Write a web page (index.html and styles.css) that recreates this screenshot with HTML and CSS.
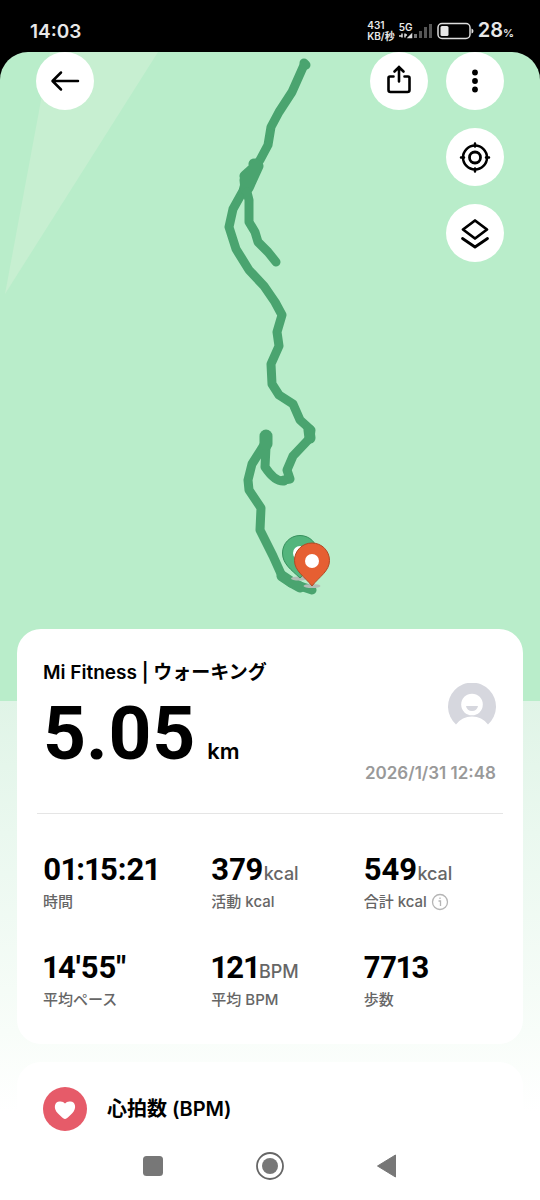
FILE: index.html
```html
<!DOCTYPE html>
<html lang="ja">
<head>
<meta charset="utf-8">
<meta name="viewport" content="width=device-width, initial-scale=1">
<title>Mi Fitness | ウォーキング</title>
<link rel="stylesheet" href="styles.css">
</head>
<body>
<header class="status">
  <time class="clock">14:03</time>
  <div class="indicators">
    <div class="speed"><span>431</span><span>KB/秒</span></div>
    <div class="signal">
      <span class="network">5G</span>
      <svg width="34" height="17" viewBox="0 0 34 17" aria-hidden="true">
        <path d="M0 13h3M3 10.500v4M6 14.500V10.500M6 12h2M9.500 14.500l3-3v3z" fill="none" stroke="#ddd" stroke-width="1.500"/>
        <path d="M15 11h3v4h-3z" fill="#777"/>
        <path d="M20 8h3v7h-3zM25 4h3v11h-3zM30 1h3v14h-3z" fill="#555"/>
      </svg>
    </div>
    <svg class="battery" width="37" height="18" viewBox="0 0 37 18" aria-hidden="true">
      <rect x="1" y="1.500" width="32" height="15" rx="4" fill="none" stroke="#ddd" stroke-width="1.500"/>
      <rect x="3.500" y="4" width="8" height="10" rx="1.500" fill="#e8e8e8"/>
      <path d="M34.500 6.500q2 .5 2 2.500t-2 2.500z" fill="#ddd"/>
    </svg>
    <div class="charge">28<small>%</small></div>
  </div>
</header>

<main class="screen">
  <section class="map" aria-label="ルート">
    <svg class="route" viewBox="0 52 540 649" preserveAspectRatio="xMidYMin slice" aria-hidden="true">
      <path d="M50 52H158L5 294z" fill="#c7efd1"/>
      <g fill="none" stroke="#4aa46f" stroke-linejoin="round" stroke-linecap="round">
        <path d="M304 63L306 65" stroke-width="9"/>
        <path d="M304 65L292 92 279 112 271 127 268 145 260 160 252 170 246 180 243 191 233 209 229 227 236 249 249 270 264 286 275 302 282 315 277 332 279 346 271 364 272 384 279 395 293 404 300 420 311 430 310 438 293 456 287 470 290 479 284 480" stroke-width="9"/>
        <path d="M284 481Q275 482 265 467L266 447M266 437L264 445 252 464 248 480 249 490 261 508 260 530 273 556 282 576 291 583 312 590" stroke-width="9"/>
        <path d="M266 436V444" stroke-width="13"/>
        <path d="M309 430L310 438M282 576L291 582 300 587" stroke-width="11"/>
        <path d="M254 164L258 166 248 188 245 176 255 167M245 180L246 190" stroke-width="11"/>
        <path d="M247 192L249 200 249 222 255 232 258 242 268 252 276 262" stroke-width="9"/>
      </g>
      <ellipse cx="299" cy="578.500" rx="8" ry="2" fill="#b2bdb5"/>
      <path d="M300 535.500c-10 0-17.500 8-17.500 17.500 0 11 9 17 17.500 25 8.500-8 17.500-14 17.500-25 0-9.500-7.500-17.500-17.500-17.500z" fill="#53b57c" stroke="#36905c"/>
      <circle cx="300" cy="553" r="7" fill="#fff"/>
      <ellipse cx="312" cy="586" rx="8.500" ry="2" fill="#b2bdb5"/>
      <path d="M312 543c-10 0-17.500 8-17.500 17.500 0 10.500 10 16 17.500 25.500 7.500-9.500 17.500-15 17.500-25.500 0-9.500-7.500-17.500-17.500-17.500z" fill="#e65f32" stroke="#b14a25"/>
      <circle cx="312" cy="561" r="7" fill="#fff"/>
    </svg>
    <div class="toolbar">
      <button class="round" aria-label="戻る">
        <svg width="36" height="36" viewBox="0 0 36 36"><path d="M31 18H6M14 9.500L5.500 18L14 26.500" fill="none" stroke="#000" stroke-width="2.500" stroke-linecap="round" stroke-linejoin="round"/></svg>
      </button>
      <div class="tools">
        <button class="round" aria-label="共有">
          <svg width="36" height="36" viewBox="0 0 36 36"><path d="M12.500 13.500H9q-1.500 0-1.500 1.500V27q0 2 2 2h17q2 0 2-2V15q0-1.500-1.500-1.500H23.500M18 18.500V5M13.500 8.500L18 4L22.500 8.500" fill="none" stroke="#000" stroke-width="2.600" stroke-linecap="round"/></svg>
        </button>
        <div class="stack">
          <button class="round" aria-label="メニュー">
            <svg width="36" height="36" viewBox="0 0 36 36"><circle cx="18" cy="9.500" r="2.900"/><circle cx="18" cy="18" r="2.900"/><circle cx="18" cy="26.500" r="2.900"/></svg>
          </button>
          <button class="round" aria-label="現在地">
            <svg width="36" height="36" viewBox="0 0 36 36"><g fill="none" stroke="#000" stroke-width="2.500" stroke-linecap="round"><circle cx="18" cy="18.500" r="12"/><circle cx="18" cy="18.500" r="5.500" stroke-width="2.800"/><path d="M18 4.500v3M18 29.500v3M4 18.500h3M29 18.500h3"/></g></svg>
          </button>
          <button class="round" aria-label="レイヤー">
            <svg width="36" height="36" viewBox="0 0 36 36"><path d="M18 5.500L30 14.500L18 23.500L6 14.500zM5.500 23.500L18 32L30.500 23.500" fill="none" stroke="#000" stroke-width="2.800" stroke-linecap="round" stroke-linejoin="round"/></svg>
          </button>
        </div>
      </div>
    </div>
  </section>

  <div class="content">
    <section class="card">
      <div class="summary">
        <div class="workout">
          <h1 class="title">Mi Fitness | ウォーキング</h1>
          <p class="distance">5.05<span class="unit">km</span></p>
        </div>
        <div class="owner">
          <svg width="48" height="48" viewBox="0 0 48 48" aria-hidden="true">
            <path d="M8 41.500A24 24 0 1 1 40 41.500Q34 33.500 24 33.500T8 41.500z" fill="#d6d7de"/>
            <circle cx="24" cy="21.500" r="10.800" fill="#fff"/>
            <path d="M18 23h12q-1 5-6 5T18 23z" fill="#d6d7de"/>
          </svg>
          <time class="date">2026/1/31 12:48</time>
        </div>
      </div>
      <dl class="stats">
        <div class="stat"><dt>時間</dt><dd>01:15:21</dd></div>
        <div class="stat"><dt>活動 kcal</dt><dd>379<span>kcal</span></dd></div>
        <div class="stat"><dt>合計 kcal
          <svg class="info" width="18" height="18" viewBox="0 0 18 18" aria-hidden="true"><g fill="none" stroke="#b5b5b5" stroke-width="1.300"><circle cx="9" cy="9" r="7.500"/><path d="M7.500 8H9.500V13M9 4.500V6"/></g></svg>
        </dt><dd>549<span>kcal</span></dd></div>
        <div class="stat"><dt>平均ペース</dt><dd>14'55"</dd></div>
        <div class="stat"><dt>平均 BPM</dt><dd>121<span>BPM</span></dd></div>
        <div class="stat"><dt>歩数</dt><dd>7713</dd></div>
      </dl>
    </section>
    <section class="card heart">
      <svg width="44" height="44" viewBox="0 0 44 44" aria-hidden="true">
        <circle cx="22" cy="22" r="22" fill="#e65b69"/>
        <path d="M22 32Q20.500 32 15 26.500C9.500 21 12 14.500 16.500 14.500Q20 14 22 16.500Q24 14 27.500 14.500C32 14.500 34.500 21 29 26.500Q23.500 32 22 32z" fill="#fff"/>
      </svg>
      <h2 class="metric">心拍数 (BPM)</h2>
    </section>
  </div>

  <nav class="navbar" aria-label="システム">
    <button aria-label="最近のアプリ"><svg width="28" height="28" viewBox="0 0 28 28"><rect x="4" y="4" width="20" height="20" rx="3.500" fill="#777"/></svg></button>
    <button aria-label="ホーム"><svg width="28" height="28" viewBox="0 0 28 28"><circle cx="14" cy="14" r="13" fill="none" stroke="#666" stroke-width="1.800"/><circle cx="14" cy="14" r="8" fill="#777"/></svg></button>
    <button aria-label="戻る"><svg width="28" height="28" viewBox="0 0 28 28"><path d="M4.500 14L22.500 3V25z" fill="#777" stroke="#777" stroke-linejoin="round"/></svg></button>
  </nav>
</main>
</body>
</html>
```
FILE: styles.css
```css
* { box-sizing: border-box; margin: 0; }

body {
  min-height: 100vh;
  display: flex;
  flex-direction: column;
  background: #000;
  font-family: Inter, "Noto Sans CJK JP", sans-serif;
}

button {
  display: grid;
  place-items: center;
  padding: 0;
  border: 0;
  background: none;
}

svg { display: block; flex: none; }

.status {
  display: flex;
  align-items: center;
  justify-content: space-between;
  height: 52px;
  padding: 10px 26px 0 30px;
  color: #e8e8e8;
}

.clock { font-size: 19px; font-weight: 600; }

.indicators { display: flex; align-items: center; gap: 4px; }

.speed {
  display: flex;
  flex-direction: column;
  font-size: 10px;
  line-height: 11px;
  font-weight: 600;
}

.signal { display: grid; }
.signal > * { grid-area: 1 / 1; }
.network { font-size: 10px; line-height: 8px; font-weight: 600; }

.charge { font-size: 20px; line-height: 24px; font-weight: 600; }
.charge small { font-size: 11px; }

.screen {
  flex: 1;
  display: flex;
  flex-direction: column;
  overflow: hidden;
  border-radius: 28px 28px 0 0;
  background: linear-gradient(#b9edca 649px, #e0f4e7 649px, #eaf8ef 780px, #f8fdf9 980px, #fff 1060px);
}

.map { display: grid; }
.map > * { grid-area: 1 / 1; }
.route { width: 100%; height: 649px; }

.toolbar {
  display: flex;
  justify-content: space-between;
  align-items: flex-start;
  padding: 0 36px;
}
.tools { display: flex; align-items: flex-start; gap: 18px; }
.stack { display: flex; flex-direction: column; gap: 18px; }

.round {
  width: 58px;
  height: 58px;
  border-radius: 50%;
  background: #fff;
}

.content {
  display: flex;
  flex-direction: column;
  gap: 18px;
  margin-top: -72px;
  padding: 0 17px;
}

.card { border-radius: 24px; background: #fff; }

.summary {
  display: flex;
  justify-content: space-between;
  align-items: flex-end;
  margin: 0 20px;
  padding: 30px 7px 28px 6px;
  border-bottom: 1px solid #e5e5e5;
}

.title { font-size: 19px; line-height: 28px; font-weight: 600; }

.distance {
  display: flex;
  align-items: baseline;
  gap: 12px;
  padding: 8px 0 14px;
  font: 700 75px/76px Roboto, sans-serif;
  font-variant-numeric: proportional-nums;
}
.unit { font: 600 22px/24px Inter, sans-serif; }

.owner {
  display: flex;
  flex-direction: column;
  align-items: flex-end;
  gap: 30px;
}
.date { font-size: 17px; line-height: 24px; font-weight: 600; color: #999; }

.stats {
  display: grid;
  grid-template-columns: 168fr 152fr 133fr;
  row-gap: 34px;
  padding: 36px 26px 32px;
}

.stat { display: flex; flex-direction: column-reverse; }
.stat dt {
  display: flex;
  align-items: center;
  gap: 4px;
  font-size: 15px;
  line-height: 24px;
  font-weight: 500;
  color: #666;
}
.stat dd {
  font: 700 31px/40px Roboto, sans-serif;
  font-variant-numeric: proportional-nums;
}
.stat span { font: 500 18px/24px Inter, sans-serif; color: #666; }

.heart {
  display: flex;
  align-items: center;
  gap: 20px;
  padding: 25px 26px 0;
}
.metric { font-size: 20px; line-height: 28px; font-weight: 600; }

.navbar {
  display: flex;
  justify-content: center;
  gap: 89px;
  margin-top: auto;
  padding-bottom: 20px;
}
```
